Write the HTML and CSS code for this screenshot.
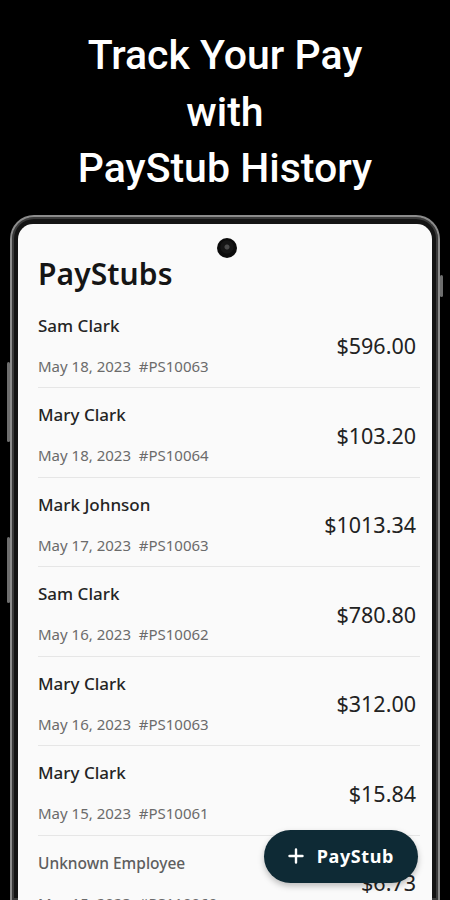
FILE: index.html
```html
<!DOCTYPE html>
<html lang="en">
<head>
  <meta charset="UTF-8">
  <meta name="viewport" content="width=device-width, initial-scale=1.0">
  <title>PayStub History</title>
  <link rel="stylesheet" href="styles.css">
</head>
<body>
  <h1 class="promo">Track Your Pay<br>with<br>PayStub History</h1>

  <!-- Phone mockup -->
  <div class="phone">
    <span class="side-btn side-btn-1"></span>
    <span class="side-btn side-btn-2"></span>
    <span class="side-btn side-btn-r"></span>
    <div class="screen">
      <span class="camera"></span>
      <h2 class="title">PayStubs</h2>

      <ul class="stubs">
        <li class="stub">
          <div class="stub-info">
            <div class="stub-name">Sam Clark</div>
            <div class="stub-meta">May 18, 2023&nbsp;&nbsp;#PS10063</div>
          </div>
          <div class="stub-amount">$596.00</div>
        </li>
        <li class="stub">
          <div class="stub-info">
            <div class="stub-name">Mary Clark</div>
            <div class="stub-meta">May 18, 2023&nbsp;&nbsp;#PS10064</div>
          </div>
          <div class="stub-amount">$103.20</div>
        </li>
        <li class="stub">
          <div class="stub-info">
            <div class="stub-name">Mark Johnson</div>
            <div class="stub-meta">May 17, 2023&nbsp;&nbsp;#PS10063</div>
          </div>
          <div class="stub-amount">$1013.34</div>
        </li>
        <li class="stub">
          <div class="stub-info">
            <div class="stub-name">Sam Clark</div>
            <div class="stub-meta">May 16, 2023&nbsp;&nbsp;#PS10062</div>
          </div>
          <div class="stub-amount">$780.80</div>
        </li>
        <li class="stub">
          <div class="stub-info">
            <div class="stub-name">Mary Clark</div>
            <div class="stub-meta">May 16, 2023&nbsp;&nbsp;#PS10063</div>
          </div>
          <div class="stub-amount">$312.00</div>
        </li>
        <li class="stub">
          <div class="stub-info">
            <div class="stub-name">Mary Clark</div>
            <div class="stub-meta">May 15, 2023&nbsp;&nbsp;#PS10061</div>
          </div>
          <div class="stub-amount">$15.84</div>
        </li>
        <li class="stub stub-faded">
          <div class="stub-info">
            <div class="stub-name">Unknown Employee</div>
            <div class="stub-meta">May 15, 2023&nbsp;&nbsp;#PS110060</div>
          </div>
          <div class="stub-amount">$6.73</div>
        </li>
      </ul>

      <button class="fab" type="button">
        <svg width="16" height="16" viewBox="0 0 16 16"><path d="M8 1.5v13M1.5 8h13" stroke="#fff" stroke-width="2.4" stroke-linecap="round"/></svg>
        PayStub
      </button>
    </div>
  </div>
</body>
</html>
```

FILE: styles.css
```css
html, body {
  height: 100%;
}

body {
  margin: 0;
  background-color: #000;
  font-family: "Noto Sans", Lato, sans-serif;
  overflow: hidden;
}

.promo {
  margin: 0;
  padding-top: 27px;
  font-family: Roboto, sans-serif;
  font-weight: 500;
  font-size: 41px;
  line-height: 56.5px;
  color: #fff;
  text-align: center;
}

.phone {
  position: relative;
  margin: 18px 10px 0;
  height: 676px;
  padding: 7px 6px 0;
  background-color: #141414;
  border: 2px solid #8c8c8c;
  border-bottom: none;
  border-radius: 24px 24px 0 0;
  box-shadow: inset 0 0 0 2px #3a3a3a;
}

.side-btn {
  position: absolute;
  left: -5px;
  width: 3px;
  background-color: #6e6e6e;
  border-radius: 2px;
}

.side-btn-1 {
  top: 145px;
  height: 80px;
}

.side-btn-2 {
  top: 320px;
  height: 66px;
}

.side-btn-r {
  left: auto;
  right: -5px;
  top: 58px;
  height: 22px;
}

.screen {
  position: relative;
  height: 100%;
  padding: 33px 16px 0 20px;
  background-color: #fafafa;
  border-radius: 15px 15px 0 0;
  overflow: hidden;
  box-sizing: border-box;
}

.camera {
  position: absolute;
  top: 14px;
  left: 199px;
  width: 20px;
  height: 20px;
  border-radius: 50%;
  background: radial-gradient(circle at 50% 45%, #4a4a4a 0 2px, #151515 3px 6px, #0b0b0b 7px);
}

.title {
  margin: 0 0 8px;
  font-size: 30px;
  line-height: 34px;
  font-weight: 600;
  letter-spacing: 0.1px;
  color: #151515;
}

.stubs {
  list-style: none;
  margin: 0;
  padding: 0;
}

.stub {
  display: flex;
  align-items: center;
  justify-content: space-between;
  padding: 17px 4px 11.5px 0;
  margin-right: -4px;
  border-bottom: 1px solid #e6e6e6;
}

.stub-name {
  font-size: 17px;
  line-height: 20px;
  font-weight: 500;
  color: #242424;
}

.stub-meta {
  margin-top: 20px;
  font-size: 15px;
  line-height: 20px;
  color: #6b6b6b;
}

.stub-amount {
  font-size: 21.5px;
  color: #222;
}

.stub-faded .stub-name {
  font-size: 15.5px;
  color: #5e5e5e;
}

.fab {
  position: absolute;
  right: 14px;
  bottom: 17px;
  display: flex;
  align-items: center;
  gap: 13px;
  height: 53px;
  padding: 0 24px 0 24px;
  border: none;
  border-radius: 27px;
  background-color: #0e2a35;
  color: #fff;
  font-family: "Noto Sans", sans-serif;
  font-weight: 700;
  font-size: 18px;
  letter-spacing: 0.6px;
  box-shadow: 0 3px 6px rgba(0,0,0,0.25);
}
```
